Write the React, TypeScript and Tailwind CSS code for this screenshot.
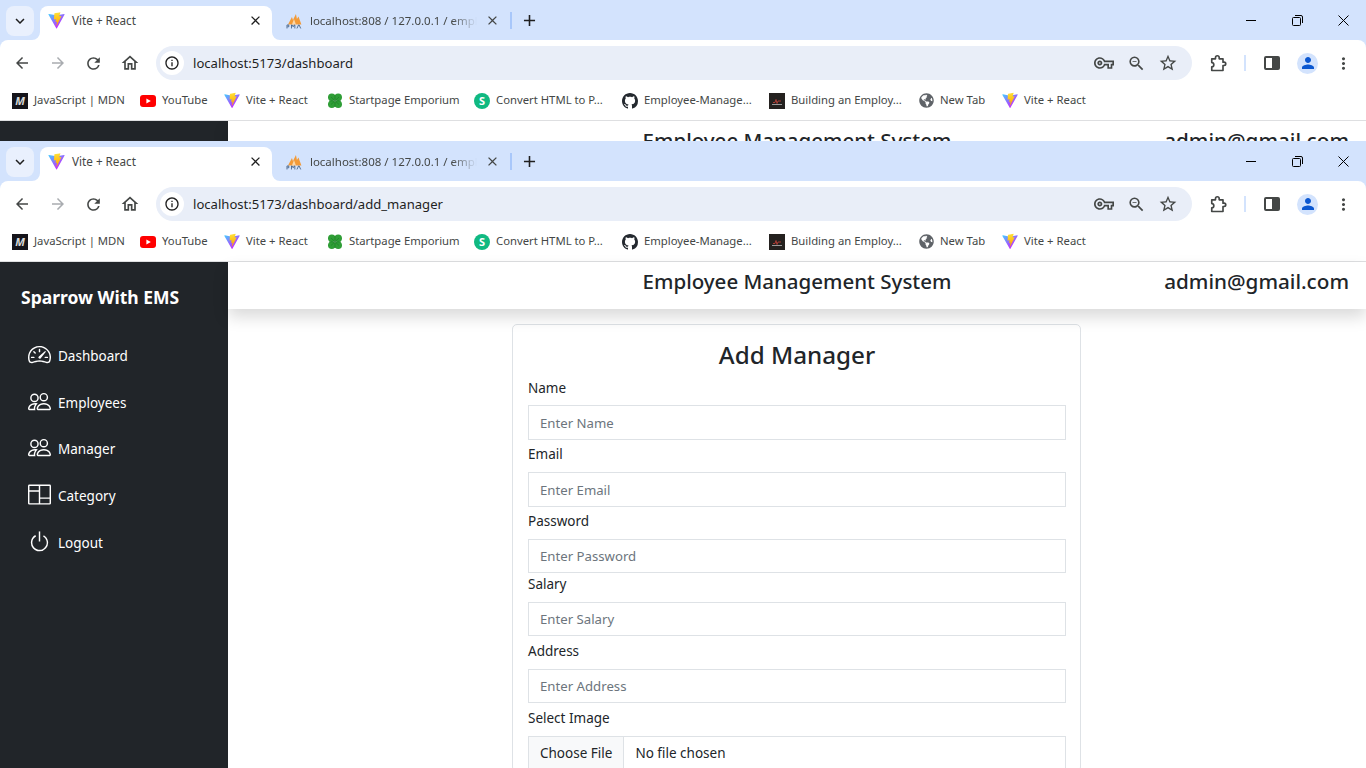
import { useId } from 'react';
import { BsColumns, BsGithub, BsPeople, BsPower, BsSpeedometer2 } from 'react-icons/bs';
import { FaGlobeAmericas } from 'react-icons/fa';
import {
  MdArrowBack,
  MdArrowForward,
  MdClose,
  MdAdd,
  MdExpandMore,
  MdInfoOutline,
  MdMoreVert,
  MdOutlineHome,
  MdOutlineVpnKey,
  MdPerson,
  MdRefresh,
  MdStarBorder,
  MdZoomOut,
} from 'react-icons/md';

const uiFont = "font-['Noto_Sans',sans-serif]";

function ViteIcon() {
  const id = useId();
  return (
    <svg width="17" height="17" viewBox="0 0 410 404" fill="none">
      <path
        d="M399.641 59.5246L215.643 388.545C211.844 395.338 202.084 395.378 198.228 388.618L10.5817 59.5563C6.38087 52.1896 12.6802 43.2665 21.0281 44.7586L205.223 77.6824C206.398 77.8924 207.601 77.8904 208.776 77.6763L389.119 44.8058C397.439 43.2894 403.768 52.1434 399.641 59.5246Z"
        fill={`url(#${id}a)`}
      />
      <path
        d="M292.965 1.5744L156.801 28.2552C154.563 28.6937 152.906 30.5903 152.771 32.8664L144.395 174.33C144.198 177.662 147.258 180.248 150.51 179.498L188.42 170.749C191.967 169.931 195.172 173.055 194.443 176.622L183.18 231.775C182.422 235.487 185.907 238.661 189.532 237.56L212.947 230.446C216.577 229.344 220.065 232.527 219.297 236.242L201.398 322.875C200.278 328.294 207.486 331.249 210.492 326.603L212.5 323.5L323.454 102.072C325.312 98.3645 322.108 94.137 318.036 94.9228L279.014 102.454C275.347 103.161 272.227 99.746 273.262 96.1583L298.731 7.86689C299.767 4.27314 296.636 0.855181 292.965 1.5744Z"
        fill={`url(#${id}b)`}
      />
      <defs>
        <linearGradient id={`${id}a`} x1="6" y1="33" x2="235" y2="344" gradientUnits="userSpaceOnUse">
          <stop stopColor="#41D1FF" />
          <stop offset="1" stopColor="#BD34FE" />
        </linearGradient>
        <linearGradient id={`${id}b`} x1="194" y1="8" x2="236" y2="293" gradientUnits="userSpaceOnUse">
          <stop stopColor="#FFEA83" />
          <stop offset="0.08" stopColor="#FFDD35" />
          <stop offset="1" stopColor="#FFA800" />
        </linearGradient>
      </defs>
    </svg>
  );
}

function PmaIcon() {
  return (
    <svg width="17" height="16" viewBox="0 0 17 16">
      <path d="M2 11.5 L6 4 L7 7 L10 1 L11 6 L12.5 3.5 L15.5 11.5 Z" fill="#f29a38" />
      <path d="M6 11.5 L8 6 L10 11.5 Z" fill="#fbd7a8" />
      <path d="M1 15.5V12h1.8v1.8H1.4M5.5 15.5V12h.6l1.1 1.8L8.3 12h.6v3.5M11 15.5l1.6-3.5h.6l1.6 3.5" fill="none" stroke="#34547c" strokeWidth="0.8" />
    </svg>
  );
}

function CloverIcon() {
  return (
    <svg width="16" height="16" viewBox="0 0 16 16">
      <circle cx="4.8" cy="4.3" r="3.8" fill="#2f9e36" />
      <circle cx="11.2" cy="4.3" r="3.8" fill="#2f9e36" />
      <circle cx="4.8" cy="11.3" r="3.8" fill="#2f9e36" />
      <circle cx="11.2" cy="11.3" r="3.8" fill="#2f9e36" />
      <path d="M8 2v12M2 7.8h12M4 4l8 7.5M12 4l-8 7.5" stroke="#1b7a26" strokeWidth="0.6" />
    </svg>
  );
}

function YoutubeIcon() {
  return (
    <svg width="16" height="12" viewBox="0 0 16 12">
      <rect width="16" height="12" rx="3" fill="#f00" />
      <path d="M6.4 3.4 10.8 6 6.4 8.6Z" fill="#fff" />
    </svg>
  );
}

function BuildingIcon() {
  return (
    <svg width="16" height="16" viewBox="0 0 16 16">
      <rect width="16" height="16" fill="#24211f" />
      <path d="M4 9.5h2l1-3 1 4 1-2.5h3" fill="none" stroke="#c9423a" strokeWidth="0.8" />
      <rect x="3" y="11" width="10" height="1" fill="#9a9a9a" />
    </svg>
  );
}

function ExtensionIcon() {
  return (
    <svg width="20" height="20" viewBox="0 0 24 24" fill="none" stroke="#444746" strokeWidth="2" strokeLinejoin="round">
      <path d="M4.5 7H9V5.5a2.2 2.2 0 0 1 4.4 0V7H18v4h1.3a2 2 0 0 1 0 4H18v6H4.5v-4.5a2.2 2.2 0 0 0 0-5Z" />
    </svg>
  );
}

// little curves where the active tab meets the toolbar
function TabFlare({ side }: { side: 'left' | 'right' }) {
  return (
    <svg
      width="8"
      height="8"
      viewBox="0 0 8 8"
      className={side === 'left' ? 'absolute bottom-0 -left-2' : 'absolute bottom-0 -right-2'}
    >
      <path d={side === 'left' ? 'M8 0V8H0A8 8 0 0 0 8 0Z' : 'M0 0V8H8A8 8 0 0 1 0 0Z'} fill="#fff" />
    </svg>
  );
}

const bookmarks = [
  {
    label: 'JavaScript | MDN',
    width: 'w-[90px]',
    icon: (
      <span className="flex h-4 w-4 items-center justify-center bg-[#15141a] text-[11px] font-bold italic leading-none text-[#d8d8d8]">
        M
      </span>
    ),
  },
  { label: 'YouTube', width: 'w-[46px]', icon: <YoutubeIcon /> },
  { label: 'Vite + React', width: 'w-[65px]', icon: <ViteIcon /> },
  { label: 'Startpage Emporium', width: 'w-[109px]', icon: <CloverIcon /> },
  {
    label: 'Convert HTML to P...',
    width: 'w-[110px]',
    icon: (
      <span className="flex h-4 w-4 items-center justify-center rounded-full bg-[#10b981] text-[11px] font-bold leading-none text-white">
        S
      </span>
    ),
  },
  { label: 'Employee-Manage...', width: 'w-[109px]', icon: <BsGithub size={16} className="text-[#24292f]" /> },
  { label: 'Building an Employ...', width: 'w-[111px]', icon: <BuildingIcon /> },
  { label: 'New Tab', width: 'w-[46px]', icon: <FaGlobeAmericas size={15} className="text-[#5f6368]" /> },
  { label: 'Vite + React', width: 'w-[65px]', icon: <ViteIcon /> },
];

function BrowserChrome({ url }: { url: string }) {
  return (
    <div className={`${uiFont} shrink-0 bg-[#d3e3fd] text-[#3c4043]`}>
      {/* tab strip */}
      <div className="flex h-10 items-end pl-[6px]">
        <div className="mb-1 flex h-[30px] w-7 items-center justify-center self-end rounded-lg bg-[#e9f0fd]">
          <MdExpandMore size={18} className="text-[#1f1f1f]" />
        </div>
        <div className="relative ml-[6px] flex h-[34px] w-[232px] items-center rounded-t-lg bg-white pb-[5px] pl-2">
          <TabFlare side="left" />
          <TabFlare side="right" />
          <ViteIcon />
          <span className="ml-[7px] flex-1 text-[11.7px] text-[#444746]">Vite + React</span>
          <MdClose size={15} className="mr-[9px] text-[#1f1f1f]" />
        </div>
        <div className="flex h-[34px] w-[240px] items-center pb-[5px] pl-[14px]">
          <PmaIcon />
          <span className="ml-[7px] w-[168px] overflow-hidden whitespace-nowrap text-[11.5px] text-[#444746] [mask-image:linear-gradient(to_right,black_85%,transparent)]">
            localhost:808 / 127.0.0.1 / employee
          </span>
          <MdClose size={15} className="ml-[8px] text-[#444746]" />
          <span className="ml-[10px] h-[17px] w-[2px] bg-[#a8c7fa]" />
        </div>
        <div className="flex h-[34px] items-center pb-[5px] pl-[8px]">
          <MdAdd size={19} className="text-[#1f1f1f]" />
        </div>
        <div className="ml-auto flex h-10 items-center">
          <div className="flex h-10 w-[46px] items-center justify-center">
            <span className="h-px w-[10px] bg-black" />
          </div>
          <div className="flex h-10 w-[46px] items-center justify-center">
            <svg width="11" height="11" viewBox="0 0 11 11" fill="none" stroke="#000">
              <rect x="0.5" y="2.5" width="8" height="8" rx="1" />
              <path d="M3 .5h6a1.5 1.5 0 0 1 1.5 1.5v6" />
            </svg>
          </div>
          <div className="flex h-10 w-[46px] items-center justify-center">
            <svg width="11" height="11" viewBox="0 0 11 11" stroke="#000">
              <path d="M.5.5l10 10M10.5.5l-10 10" />
            </svg>
          </div>
        </div>
      </div>
      {/* toolbar */}
      <div className="flex h-[44px] items-center rounded-t-lg bg-white pl-[13px] pr-[13px] pt-[2px]">
        <MdArrowBack size={18} className="text-[#444746]" />
        <MdArrowForward size={18} className="ml-[18px] text-[#a9acb0]" />
        <MdRefresh size={19} className="ml-[17px] text-[#444746]" />
        <MdOutlineHome size={20} className="ml-[17px] text-[#444746]" />
        <div className="ml-[16px] flex h-[34px] w-[1036px] items-center rounded-full bg-[#e9eef8] pl-1 pr-[14px]">
          <span className="flex h-6 w-6 items-center justify-center rounded-full bg-white">
            <MdInfoOutline size={16} className="text-[#1f1f1f]" />
          </span>
          <span className="ml-[9px] flex-1 pt-px text-[13.1px] text-[#1f1f1f]">{url}</span>
          <MdOutlineVpnKey size={20} className="text-[#444746]" />
          <MdZoomOut size={19} className="ml-[13px] text-[#444746]" />
          <MdStarBorder size={20} className="ml-[12px] text-[#444746]" />
        </div>
        <span className="ml-[16px]">
          <ExtensionIcon />
        </span>
        <span className="ml-[16px] h-4 w-[2px] bg-[#d3e3fd]" />
        <span className="ml-[18px] flex h-[14px] w-4 rounded-[2px] border-2 border-[#444746]">
          <span className="ml-auto h-full w-[6px] bg-[#444746]" />
        </span>
        <span className="ml-[17px] flex h-[21px] w-[21px] items-center justify-center rounded-full bg-[#d3e3fd]">
          <MdPerson size={18} className="text-[#0b57d0]" />
        </span>
        <MdMoreVert size={19} className="ml-[16px] text-[#444746]" />
      </div>
      {/* bookmarks */}
      <div className="flex h-[37px] items-center gap-4 border-b border-[#dedfe1] bg-white pb-[3px] pl-3 text-[#444746]">
        {bookmarks.map((b, i) => (
          <div key={i} className="flex items-center gap-[6px]">
            <span className="flex h-4 w-4 items-center justify-center">{b.icon}</span>
            <span className={`${b.width} whitespace-nowrap text-[11.3px]`}>{b.label}</span>
          </div>
        ))}
      </div>
    </div>
  );
}

const navItems = [
  { label: 'Dashboard', icon: BsSpeedometer2, rowClass: 'h-[47px]' },
  { label: 'Employees', icon: BsPeople, rowClass: 'h-[46px]' },
  { label: 'Manager', icon: BsPeople, rowClass: 'h-[47px]' },
  { label: 'Category', icon: BsColumns, rowClass: 'h-[47px]' },
  { label: 'Logout', icon: BsPower, rowClass: 'h-[47px]' },
];

function Sidebar() {
  return (
    <aside className="w-[228px] shrink-0 bg-[#212529] text-white">
      <div className="pl-[21px] pt-[23px] text-[17.5px] font-bold leading-[24px]">Sparrow With EMS</div>
      <nav className="mt-[24px]">
        {navItems.map((item) => (
          <div key={item.label} className={`flex items-center pl-[28px] ${item.rowClass}`}>
            <item.icon size={23} className="-mt-1" />
            <span className="ml-[7px] text-[13.5px]">{item.label}</span>
          </div>
        ))}
      </nav>
    </aside>
  );
}

function TopBar() {
  return (
    <div className="relative flex h-[47px] shrink-0 items-center justify-center bg-white text-[20.5px] font-medium text-[#212529] shadow-[0_8px_16px_rgba(0,0,0,0.15)]">
      <span className="-mt-[9px]">Employee Management System</span>
      <span className="absolute right-[17px] top-[4px] text-[20.7px]">admin@gmail.com</span>
    </div>
  );
}

const fields = [
  { label: 'Name', placeholder: 'Enter Name', gap: 'mt-0', inputGap: 'mt-[7px]', height: 'h-[35px]' },
  { label: 'Email', placeholder: 'Enter Email', gap: 'mt-[4px]', inputGap: 'mt-[8px]', height: 'h-[35px]' },
  { label: 'Password', placeholder: 'Enter Password', gap: 'mt-[4px]', inputGap: 'mt-[8px]', height: 'h-[34px]' },
  { label: 'Salary', placeholder: 'Enter Salary', gap: 'mt-[1px]', inputGap: 'mt-[8px]', height: 'h-[34px]' },
  { label: 'Address', placeholder: 'Enter Address', gap: 'mt-[5px]', inputGap: 'mt-[8px]', height: 'h-[34px]' },
];

function AddManagerForm() {
  return (
    <div className="mr-px mt-[15px] w-[569px] shrink-0 rounded-[5px] border border-[#dee2e6] bg-white pl-[15px] pr-[14px] pt-[9px] text-[13.5px] text-[#212529]">
      <h3 className="mb-[2px] text-center text-[24.2px] font-medium leading-[42px]">Add Manager</h3>
      {fields.map((f) => (
        <div key={f.label} className={f.gap}>
          <label className="block h-[20px] leading-[20px]">{f.label}</label>
          <input
            placeholder={f.placeholder}
            className={`${f.inputGap} ${f.height} block w-full border border-[#dee2e6] px-[11px] text-[13.2px] outline-none placeholder:text-[#6c757d]`}
          />
        </div>
      ))}
      <div className="mt-[5px]">
        <label className="block h-[20px] leading-[20px]">Select Image</label>
        <div className="mt-[8px] flex h-[35px] border border-[#dee2e6]">
          <span className="flex items-center border-r border-[#dee2e6] bg-[#f8f9fa] px-[11px]">Choose File</span>
          <span className="flex items-center pl-[11px]">No file chosen</span>
        </div>
      </div>
    </div>
  );
}

export default function App() {
  return (
    <div className={`${uiFont} flex h-[768px] flex-col overflow-hidden bg-white`}>
      <BrowserChrome url="localhost:5173/dashboard" />
      {/* the window behind only shows a 20px strip of its page */}
      <div className="flex h-5 shrink-0 overflow-hidden">
        <div className="w-[228px] shrink-0 bg-[#212529]" />
        <div className="flex-1">
          <TopBar />
        </div>
      </div>
      <BrowserChrome url="localhost:5173/dashboard/add_manager" />
      <div className="flex min-h-0 flex-1">
        <Sidebar />
        <main className="flex min-w-0 flex-1 flex-col">
          <TopBar />
          <div className="flex justify-center">
            <AddManagerForm />
          </div>
        </main>
      </div>
    </div>
  );
}
